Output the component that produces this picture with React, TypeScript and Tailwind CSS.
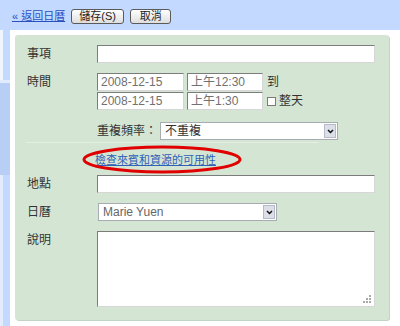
const font = { fontFamily: '"Liberation Sans", "Noto Sans CJK TC", sans-serif' };

function Box({ w, children, pl = "pl-[3px]" }: { w: string; children?: React.ReactNode; pl?: string }) {
  return (
    <div
      className={`${w} h-[18px] bg-white border border-t-[#7c7c7c] border-l-[#7c7c7c] border-b-[#d6d6d6] border-r-[#d6d6d6] flex items-center ${pl} text-[12px] text-[#707070] leading-none`}
    >
      {children}
    </div>
  );
}

function Select({ w, text, color = "text-[#333]" }: { w: string; text: string; color?: string }) {
  return (
    <div
      className={`${w} h-[18px] bg-white border border-[#a5acb2] flex items-center justify-between pl-[4px] pr-px text-[12px] ${color} leading-none`}
    >
      <span>{text}</span>
      <span className="w-[12px] h-[14px] bg-[#dcdfe8] border border-[#b4bac8] flex items-center justify-center">
        <svg width="7" height="5" viewBox="0 0 7 5">
          <path d="M1 1 L3.5 3.5 L6 1" fill="none" stroke="#111" strokeWidth="1.5" />
        </svg>
      </span>
    </div>
  );
}

function Label({ children }: { children: React.ReactNode }) {
  return (
    <div className="w-[70px] h-[18px] flex items-center text-[12px] text-[#333] leading-none">
      {children}
    </div>
  );
}

function Btn({ children, w }: { children: React.ReactNode; w: string }) {
  return (
    <div
      className={`${w} h-[15px] rounded-[3px] border border-[#5a5a5a] bg-gradient-to-b from-white to-[#dedede] flex items-center justify-center text-[11px] text-[#222] leading-none`}
    >
      {children}
    </div>
  );
}

export default function App() {
  return (
    <div className="w-[400px] h-[326px] bg-white overflow-hidden flex flex-col" style={font}>
      {/* top bar */}
      <div className="h-[30px] bg-[#c3d9ff] flex items-center pl-[12px] pt-[3px] gap-[6px] shrink-0">
        <span className="text-[11px] text-[#2a4fbf] underline leading-none">« 返回日曆</span>
        <Btn w="w-[53px]">儲存(S)</Btn>
        <Btn w="w-[41px]">取消</Btn>
      </div>

      <div className="flex flex-1">
        {/* left edge of sidebar */}
        <div className="w-[10px] flex flex-col">
          <div className="h-[50px] flex">
            <div className="w-[3px] bg-[#f0f4fb]" />
            <div className="flex-1 bg-[#c3d9ff]" />
          </div>
          <div className="h-[3px] bg-[#e0ecff]" />
          <div className="h-[92px] bg-[#b8cff5]" />
          <div className="flex-1 flex">
            <div className="w-[3px] bg-[#e3ecfc]" />
            <div className="flex-1 bg-[#c3d9ff]" />
          </div>
        </div>

        <div className="flex-1 pl-[5px] pt-[5px]">
          <div className="relative w-[374px] h-[285px] bg-[#d4e6d3] rounded-[3px] shadow-[1px_1px_0_#c4d3c4] pl-[12px] pt-[10px] flex flex-col">
            <div className="flex">
              <Label>事項</Label>
              <Box w="w-[278px]" />
            </div>

            <div className="flex mt-[10px]">
              <Label>時間</Label>
              <div className="flex flex-col gap-px">
                <div className="flex items-center">
                  <Box w="w-[87px]">2008-12-15</Box>
                  <div className="w-[3px]" />
                  <Box w="w-[76px]">上午12:30</Box>
                  <span className="ml-[4px] text-[12px] text-[#333] leading-none">到</span>
                </div>
                <div className="flex items-center">
                  <Box w="w-[87px]">2008-12-15</Box>
                  <div className="w-[3px]" />
                  <Box w="w-[76px]">上午1:30</Box>
                  <span className="ml-[4px] w-[9px] h-[9px] bg-white border border-[#7a7a7a]" />
                  <span className="ml-[3px] text-[12px] text-[#333] leading-none">整天</span>
                </div>
              </div>
            </div>

            <div className="flex items-center mt-[12px] pl-[70px]">
              <span className="w-[63px] text-[12px] text-[#333] leading-none">重複頻率：</span>
              <Select w="w-[178px]" text="不重複" />
            </div>

            <div className="mt-[2px] ml-[-1px] w-[292px] h-px bg-[#e4efe3]" />

            <div className="mt-[10px] h-[14px] pl-[68px] flex items-center">
              <span className="text-[11px] text-[#3060b8] underline leading-none">檢查來賓和資源的可用性</span>
            </div>

            <div className="flex mt-[8px]">
              <Label>地點</Label>
              <Box w="w-[278px]" />
            </div>

            <div className="flex mt-[10px]">
              <Label>日曆</Label>
              <div className="ml-px">
                <Select w="w-[179px]" text="Marie Yuen" color="text-[#666]" />
              </div>
            </div>

            <div className="flex mt-[10px]">
              <Label>說明</Label>
              <div className="relative w-[278px] h-[76px] bg-white border border-t-[#7c7c7c] border-l-[#7c7c7c] border-b-[#d6d6d6] border-r-[#d6d6d6]">
                <svg className="absolute right-[2px] bottom-[2px]" width="9" height="9" viewBox="0 0 9 9">
                  <rect x="6" y="0" width="2" height="2" fill="#a8a8a8" />
                  <rect x="3" y="3" width="2" height="2" fill="#a8a8a8" />
                  <rect x="6" y="3" width="2" height="2" fill="#a8a8a8" />
                  <rect x="0" y="6" width="2" height="2" fill="#a8a8a8" />
                  <rect x="3" y="6" width="2" height="2" fill="#a8a8a8" />
                  <rect x="6" y="6" width="2" height="2" fill="#a8a8a8" />
                </svg>
              </div>
            </div>

            {/* red annotation ellipse */}
            <svg className="absolute left-0 top-0 pointer-events-none" width="374" height="285">
              <ellipse cx="147" cy="124.5" rx="78" ry="12.5" fill="none" stroke="#e00000" strokeWidth="3" />
            </svg>
          </div>
        </div>
      </div>
    </div>
  );
}
